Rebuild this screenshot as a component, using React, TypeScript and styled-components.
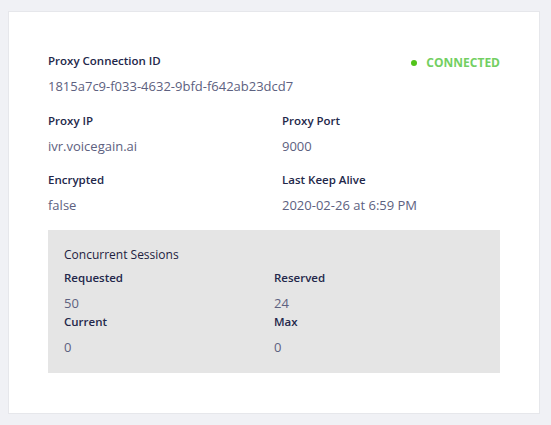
import React from "react";
import styled, { createGlobalStyle } from "styled-components";

const GlobalStyle = createGlobalStyle`
    html, body {
        margin: 0;
        padding: 0;
        background: #f0f1f5;
    }
    body {
        font-family: "Open Sans", "Noto Sans", sans-serif;
    }
`;

const fields = [
    [
        { label: "Proxy IP", value: "ivr.voicegain.ai" },
        { label: "Proxy Port", value: "9000" },
    ],
    [
        { label: "Encrypted", value: "false" },
        { label: "Last Keep Alive", value: "2020-02-26 at 6:59 PM" },
    ],
];

const sessions = [
    [
        { label: "Requested", value: "50" },
        { label: "Reserved", value: "24" },
    ],
    [
        { label: "Current", value: "0" },
        { label: "Max", value: "0" },
    ],
];

const App: React.FC = () => {
    return (
        <>
            <GlobalStyle />
            <Page>
                <Card>
                    <Header>
                        <div>
                            <Label>Proxy Connection ID</Label>
                            <Value>1815a7c9-f033-4632-9bfd-f642ab23dcd7</Value>
                        </div>
                        <Status>
                            <Dot />
                            CONNECTED
                        </Status>
                    </Header>
                    {fields.map((row, i) => (
                        <FieldRow key={i}>
                            {row.map((f) => (
                                <div key={f.label}>
                                    <Label>{f.label}</Label>
                                    <Value>{f.value}</Value>
                                </div>
                            ))}
                        </FieldRow>
                    ))}
                    <SessionBox>
                        <SessionTitle>Concurrent Sessions</SessionTitle>
                        {sessions.map((row, i) => (
                            <SessionRow key={i}>
                                {row.map((f) => (
                                    <div key={f.label}>
                                        <Label>{f.label}</Label>
                                        <Value>{f.value}</Value>
                                    </div>
                                ))}
                            </SessionRow>
                        ))}
                    </SessionBox>
                </Card>
            </Page>
        </>
    );
};

export default App;

const Page = styled.div`
    width: 551px;
    height: 425px;
    padding: 11px 11px 11px 8px;
    box-sizing: border-box;
`;

const Card = styled.div`
    width: 532px;
    height: 403px;
    box-sizing: border-box;
    background: #ffffff;
    border: 1px solid #e6e7eb;
    padding: 40px 39px 0 39px;
`;

const Header = styled.div`
    display: flex;
    justify-content: space-between;
    align-items: flex-start;
    margin-bottom: 16px;
`;

const Label = styled.div`
    font-size: 11.5px;
    font-weight: 600;
    line-height: 17px;
    color: #23274a;
`;

const Value = styled.div`
    margin-top: 7px;
    font-size: 13px;
    font-weight: 400;
    line-height: 20px;
    color: #5d6180;
`;

const Status = styled.div`
    display: flex;
    align-items: center;
    gap: 9px;
    font-size: 12px;
    font-weight: 700;
    line-height: 17px;
    color: #73cf62;
    margin-top: 2px;
`;

const Dot = styled.span`
    width: 6px;
    height: 6px;
    border-radius: 50%;
    background: #52c41a;
`;

const FieldRow = styled.div`
    display: grid;
    grid-template-columns: 234px 1fr;
    margin-bottom: 15px;
`;

const SessionBox = styled.div`
    width: 452px;
    box-sizing: border-box;
    margin-top: 1px;
    background: #e5e5e5;
    padding: 16px;
    display: flex;
    flex-direction: column;
`;

const SessionTitle = styled.div`
    font-size: 12px;
    font-weight: 400;
    line-height: 17px;
    color: #1d2140;
    margin-bottom: 6px;
`;

const SessionRow = styled.div`
    display: grid;
    grid-template-columns: 210px 1fr;
`;
